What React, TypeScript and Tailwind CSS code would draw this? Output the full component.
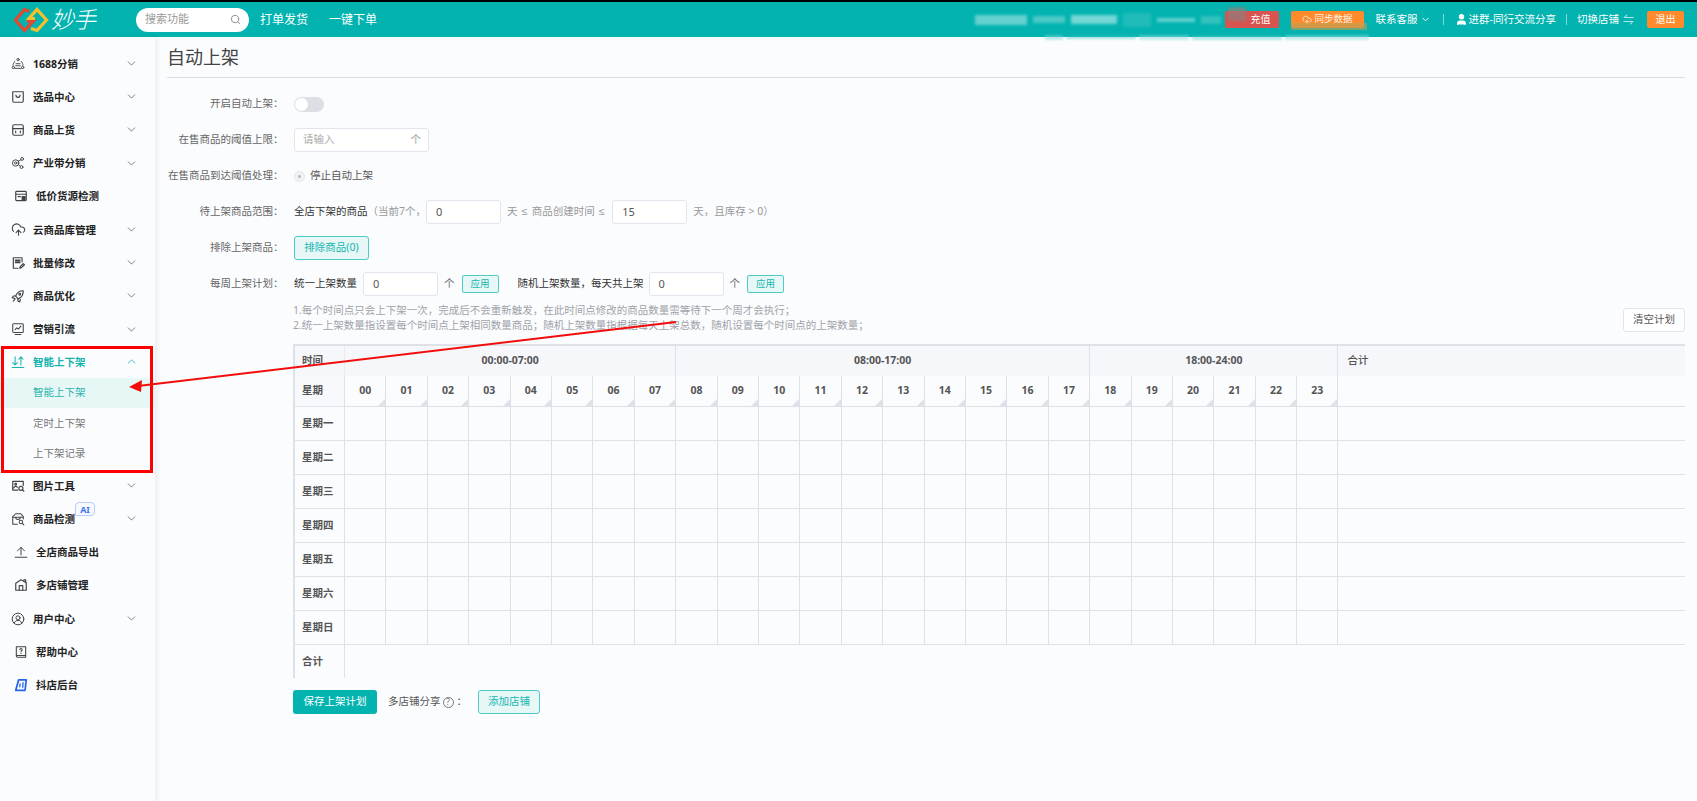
import { ChevronDown, ChevronUp, Search, CloudUpload, User } from "lucide-react"
import type { ReactNode } from "react"

const ic = { width: 14, height: 14, viewBox: "0 0 24 24", fill: "none", stroke: "currentColor", strokeWidth: 1.6, strokeLinecap: "round" as const, strokeLinejoin: "round" as const }

const icons: Record<string, ReactNode> = {
    fenxiao: (
        <svg {...ic}>
            <circle cx="12" cy="4.500" r="2" />
            <circle cx="4" cy="18" r="2" />
            <circle cx="20" cy="18" r="2" />
            <path d="M6.500 7.500c-2 2.500-3 4.500-3 7M17.500 7.500c2 2.500 3 4.500 3 7M6.500 19.500h11M8.500 11.500h7M8 15h8" />
        </svg>
    ),
    xuanpin: (
        <svg {...ic} strokeWidth={2}>
            <path d="M3 3h18v16a2 2 0 0 1-2 2H5a2 2 0 0 1-2-2z" />
            <path d="M8.500 8.500c0 5.500 7 5.500 7 0" />
        </svg>
    ),
    store: (
        <svg {...ic} strokeWidth={2}>
            <rect x="3" y="3" width="18" height="18" rx="2.500" />
            <path d="M3 9.500h18M8 14v2.500M16 14v2.500" />
        </svg>
    ),
    nodes: (
        <svg {...ic}>
            <circle cx="8" cy="12" r="5.500" />
            <circle cx="8" cy="12" r="2" />
            <circle cx="19" cy="5" r="2.500" />
            <circle cx="18" cy="19" r="2.500" />
            <path d="M12.500 9l4.500-2.500M13 15l3 2.500" />
        </svg>
    ),
    wallet: (
        <svg {...ic} strokeWidth={2}>
            <rect x="3" y="4" width="18" height="16" rx="1.500" />
            <path d="M3 9h18M7 13h4" />
            <rect x="14" y="13" width="5" height="5" fill="currentColor" />
        </svg>
    ),
    cloud: <CloudUpload size={15} strokeWidth={1.7} />,
    edit: (
        <svg {...ic} strokeWidth={2}>
            <path d="M19 10V3H4v18h8" />
            <path d="M8 7.500h7M8 11h7" strokeWidth={3} />
            <path d="M15 21l1-3 5-5 2 2-5 5z" />
        </svg>
    ),
    rocket: (
        <svg {...ic} strokeWidth={2}>
            <path d="M21 3c-6 0-11 3-13 9l4 5c6-2 9-7 9-14z" />
            <path d="M8 12H4l-2 3 4 1M12 17v4l3 1 1-4M7 17l-3 4" />
            <circle cx="15" cy="9" r="1.500" />
        </svg>
    ),
    chart: (
        <svg {...ic} strokeWidth={1.800}>
            <rect x="3" y="3" width="18" height="15" rx="1.500" />
            <path d="M7 13l3-3 3 2 4-5M7 21.500h10" />
        </svg>
    ),
    updown: (
        <svg {...ic} strokeWidth={1.800}>
            <path d="M7 3v14M3 13l4 4 4-4M17 17V3M13.500 7L17 3l3.500 4M2 21.500h20" />
        </svg>
    ),
    image: (
        <svg {...ic} strokeWidth={2}>
            <path d="M12 19H3V4h18v7" />
            <circle cx="8" cy="9" r="1.500" />
            <path d="M3 16l5-4 3 2" />
            <circle cx="17" cy="16" r="3.500" />
            <path d="M19.500 18.500L22 21" />
        </svg>
    ),
    boxcheck: (
        <svg {...ic} strokeWidth={1.800}>
            <path d="M11 21H3V8l5-5h9l4 5v4" />
            <path d="M3 9h18M8 9c0 5 8 5 8 0" />
            <circle cx="17" cy="17" r="3" />
            <path d="M19.500 19.500L22 22" />
        </svg>
    ),
    upload: (
        <svg {...ic} strokeWidth={1.700}>
            <path d="M12 17V4M6 10l6-6 6 6M2 21h20" />
        </svg>
    ),
    house: (
        <svg {...ic} strokeWidth={2}>
            <path d="M3 9l9-6 9 5v13H3z" />
            <path d="M9 21v-8h6v8M17 5.500V3h3v5" />
        </svg>
    ),
    user: (
        <svg {...ic} strokeWidth={1.700}>
            <circle cx="12" cy="12" r="10" />
            <circle cx="12" cy="10" r="3.500" />
            <path d="M5.500 19c1-3 3.500-4.500 6.500-4.500s5.500 1.500 6.500 4.500" />
        </svg>
    ),
    help: (
        <svg {...ic} strokeWidth={1.800}>
            <path d="M4 3h16v18H6a2 2 0 0 1-2-2z" />
            <path d="M4 18h16" />
            <path d="M10 8c0-2.500 4-2.500 4 0 0 1.500-2 1.500-2 3.500M12 14v.5" />
        </svg>
    ),
    doudian: (
        <svg {...ic} strokeWidth={3} className="text-[#2563eb]">
            <path d="M8 3h13l-2 18H3z" />
            <path d="M10 15l.5-5M15 16l.5-8" strokeWidth={2.200} />
        </svg>
    ),
}

const before = [
    { label: "1688分销", icon: "fenxiao", arrow: true },
    { label: "选品中心", icon: "xuanpin", arrow: true },
    { label: "商品上货", icon: "store", arrow: true },
    { label: "产业带分销", icon: "nodes", arrow: true },
    { label: "低价货源检测", icon: "wallet" },
    { label: "云商品库管理", icon: "cloud", arrow: true },
    { label: "批量修改", icon: "edit", arrow: true },
    { label: "商品优化", icon: "rocket", arrow: true },
    { label: "营销引流", icon: "chart", arrow: true },
]

const after = [
    { label: "图片工具", icon: "image", arrow: true },
    { label: "商品检测", icon: "boxcheck", arrow: true, ai: true },
    { label: "全店商品导出", icon: "upload" },
    { label: "多店铺管理", icon: "house" },
    { label: "用户中心", icon: "user", arrow: true },
    { label: "帮助中心", icon: "help" },
    { label: "抖店后台", icon: "doudian" },
]

interface MenuItem {
    label: string
    icon: string
    arrow?: boolean
    ai?: boolean
}

function MenuRow({ item }: { item: MenuItem }) {
    return (
        <div className={`relative flex h-[33.2px] items-center ${item.arrow ? "pl-[11px]" : "pl-[14px]"}`}>
            <span className="flex w-[22px] shrink-0 text-[#444]">{icons[item.icon]}</span>
            <span className="text-[10.5px] font-bold leading-4 text-[#222]">{item.label}</span>
            {item.arrow && <ChevronDown size={13} strokeWidth={1.5} className="absolute left-[125px] text-[#666]" />}
            {item.ai && (
                <span className="absolute left-[75px] top-0 flex h-[14px] w-[20px] items-center justify-center rounded-[4px] rounded-bl-none border border-[#b7cdfb] bg-[#f7f9ff] text-[9px] font-bold leading-none text-[#3f76ee]">
                    AI
                </span>
            )}
        </div>
    )
}

function Sidebar() {
    return (
        <aside className="z-10 h-full w-[155px] shrink-0 bg-[#fbfcfe] pt-[10px] shadow-[2px_0_5px_rgba(0,0,0,0.07)]">
            {before.map((item) => (
                <MenuRow key={item.label} item={item} />
            ))}
            <div className="relative flex h-[32px] items-center pl-[11px] text-[#14b5b1]">
                <span className="flex w-[22px] shrink-0">{icons.updown}</span>
                <span className="text-[10.5px] font-bold leading-4">智能上下架</span>
                <ChevronUp size={13} strokeWidth={1.5} className="absolute left-[125px]" />
            </div>
            <div className="flex h-[30.500px] items-center bg-[#e6f7f6] pl-[33px] text-[10.5px] text-[#2ab5b1]">智能上下架</div>
            <div className="flex h-[30.500px] items-center pl-[33px] text-[10.5px] text-[#777]">定时上下架</div>
            <div className="flex h-[30.500px] items-center pl-[33px] text-[10.5px] text-[#777]">上下架记录</div>
            {after.map((item) => (
                <MenuRow key={item.label} item={item} />
            ))}
        </aside>
    )
}

function Logo() {
    return (
        <svg width="36" height="26" viewBox="0 0 36 26" fill="none" strokeWidth="3.200" strokeLinejoin="miter">
            <path d="M16 4.500L11.500 2.500L2.500 13L11.500 23.500L20 14.500L14 14.500" stroke="#e04a35" />
            <path d="M18 21.500L24 23.500L33.500 13L24 2.500L16 11.500L22 11.500" stroke="#f6c02c" />
        </svg>
    )
}

function Header() {
    return (
        <header className="relative flex h-[37px] shrink-0 items-center border-t-2 border-black bg-[#02b3b0] pl-[13px] text-white">
            <Logo />
            <span className="ml-[2px] w-[85px] text-[23px] font-light italic leading-none tracking-[-1px]">妙手</span>
            <div className="flex h-6 w-[113px] items-center justify-between rounded-full bg-white pl-[9px] pr-[8px] text-[11px] text-[#999]">
                搜索功能
                <Search size={11} className="text-[#888]" />
            </div>
            <span className="ml-[11px] text-xs">打单发货</span>
            <span className="ml-[21px] text-xs">一键下单</span>

            <div className="ml-auto flex items-center pr-[13px]">
                <div className="mr-[4px] flex items-center gap-[6px] opacity-60 blur-[1.500px]">
                    <span className="h-[10px] w-[52px] bg-[#a8e6e4]" />
                    <span className="h-[7px] w-[32px] bg-[#7cd9d6]" />
                    <span className="h-[9px] w-[46px] bg-[#c2f0ee]" />
                    <span className="h-[14px] w-[28px] bg-[#36c2bf]" />
                    <span className="h-[4px] w-[38px] bg-[#a8e6e4]" />
                    <span className="h-[8px] w-[20px] bg-[#56cdc9]" />
                </div>
                <span className="relative flex h-[17px] w-[54px] items-center justify-end rounded-[2px] bg-[#d9534f] pr-[8px] text-[10px]">
                    充值
                    <span className="absolute left-[3px] top-[-4px] h-[14px] w-[18px] bg-[#8f7f7d] opacity-70 blur-[1px]" />
                </span>
                <span className="relative ml-[12px] flex h-[17px] w-[73px] items-center justify-center gap-[3px] rounded-[2px] bg-[#ff8b2c] text-[9.5px] text-white/90">
                    <CloudUpload size={10} />
                    同步数据
                    <span className="absolute bottom-[-2px] left-0 h-[7px] w-[76px] bg-[#b9a15a] opacity-60 blur-[0.5px]" />
                </span>
                <span className="ml-[12px] text-[10.5px]">联系客服</span>
                <ChevronDown size={11} className="ml-[2px]" />
                <span className="ml-[12px] h-[11px] w-px bg-white/50" />
                <User size={13} className="ml-[11px]" fill="currentColor" />
                <span className="ml-[1px] text-[10.5px]">进群-同行交流分享</span>
                <span className="ml-[10px] h-[11px] w-px bg-white/50" />
                <span className="ml-[10px] text-[10.5px]">切换店铺</span>
                <span className="ml-[4px] text-[11px] leading-none text-white/80">⇋</span>
                <span className="ml-[13px] flex h-[17px] w-[37px] items-center justify-center rounded-[2px] bg-[#ff8b2c] text-[10px]">退出</span>
            </div>
            <div className="absolute left-[1045px] top-[33px] z-20 flex items-center gap-[3px] opacity-50 blur-[1px]">
                <span className="h-[5px] w-[18px] bg-[#7fd8d5]" />
                <span className="h-[3px] w-[70px] bg-[#4cc9c6]" />
                <span className="h-[5px] w-[50px] bg-[#8fdcda]" />
                <span className="h-[4px] w-[90px] bg-[#6fd3d0]" />
                <span className="h-[5px] w-[84px] bg-[#8fdcda]" />
            </div>
        </header>
    )
}

function Field({ value, className }: { value: string; className: string }) {
    return (
        <span className={`flex h-6 items-center rounded-[3px] border border-[#e2e5eb] bg-white pl-[9px] text-[11px] text-[#555] ${className}`}>
            {value}
        </span>
    )
}

function FormRow({ label, children }: { label: string; children: ReactNode }) {
    return (
        <div className="flex h-6 items-center">
            <span className="w-[116.5px] shrink-0 whitespace-nowrap text-right text-[10.5px] text-[#666]">{label}：</span>
            <div className="ml-[10.5px] flex items-center text-[10.5px] text-[#333]">{children}</div>
        </div>
    )
}

function ApplyButton({ className }: { className: string }) {
    return (
        <span className={`flex h-[18px] w-[37px] items-center justify-center rounded-[2px] border border-[#4ccbc7] bg-[#e6f7f6] text-[9.5px] text-[#14b5b1] ${className}`}>
            应用
        </span>
    )
}

const hours = Array.from({ length: 24 }, (_, i) => String(i).padStart(2, "0"))
const weekdays = ["星期一", "星期二", "星期三", "星期四", "星期五", "星期六", "星期日"]
const line = "border-r border-b border-[#dfe1e8]"

function PlanTable() {
    return (
        <table className="w-[1392px] table-fixed border-separate border-spacing-0 border-t-2 border-l-2 border-[#dfe1e8]">
            <colgroup>
                <col className="w-[50px]" />
                {hours.map((h) => (
                    <col key={h} className="w-[41.400px]" />
                ))}
                <col />
            </colgroup>
            <tbody className="text-[10.5px] font-bold text-[#555]">
                <tr className="h-[30px] bg-[#f6f7fb]">
                    <td className="border-r border-[#e9ebf0] pl-[7px]">时间</td>
                    <td colSpan={8} className="border-r border-[#dfe1e8] text-center">00:00-07:00</td>
                    <td colSpan={10} className="border-r border-[#dfe1e8] text-center">08:00-17:00</td>
                    <td colSpan={6} className="border-r border-[#dfe1e8] text-center">18:00-24:00</td>
                    <td className="pl-[9px] font-medium">合计</td>
                </tr>
                <tr className="h-[31px]">
                    <td className={`${line} bg-[#f8f9fc] pl-[7px]`}>星期</td>
                    {hours.map((h) => (
                        <td key={h} className={`${line} relative text-center`}>
                            {h}
                            <span className="absolute bottom-0 right-0 h-0 w-0 border-b-[7px] border-l-[7px] border-b-[#dfe1e8] border-l-transparent" />
                        </td>
                    ))}
                    <td className="border-b border-[#dfe1e8]" />
                </tr>
                {weekdays.map((d) => (
                    <tr key={d} className="h-[34px]">
                        <td className={`${line} pl-[7px]`}>{d}</td>
                        {hours.map((h) => (
                            <td key={h} className={line} />
                        ))}
                        <td className="border-b border-[#dfe1e8]" />
                    </tr>
                ))}
                <tr className="h-[33px]">
                    <td className="border-r border-[#dfe1e8] pl-[7px]">合计</td>
                    <td colSpan={25} />
                </tr>
            </tbody>
        </table>
    )
}

function Annotation() {
    return (
        <>
            <div className="absolute left-px top-[346px] z-30 h-[127px] w-[152px] border-[3px] border-[#ff0000]" />
            <svg className="absolute left-0 top-0 z-30" width="700" height="400" fill="none">
                <path d="M676 322L138 386" stroke="#f20d0d" strokeWidth="2" />
                <path d="M129 387L142 380L141 392Z" fill="#f20d0d" />
            </svg>
        </>
    )
}

export default function App() {
    return (
        <div className="relative flex h-[801px] w-[1697px] flex-col overflow-hidden bg-[#fbfcfe] font-['Noto_Sans','Noto_Sans_CJK_SC',sans-serif]">
            <Header />
            <div className="flex min-h-0 flex-1">
                <Sidebar />
                <main className="min-w-0 flex-1 pl-[12px] pr-[12px]">
                    <h1 className="h-[41px] border-b border-[#dcdee3] pt-[8px] text-[18px] font-normal leading-6 text-[#444]">自动上架</h1>
                    <div className="mt-[14px] flex flex-col gap-3">
                        <FormRow label="开启自动上架">
                            <span className="flex h-[15px] w-[30px] items-center rounded-full bg-[#dcdfe6] pl-[1px]">
                                <span className="h-[13px] w-[13px] rounded-full bg-white" />
                            </span>
                        </FormRow>
                        <FormRow label="在售商品的阈值上限">
                            <span className="flex h-6 w-[135px] items-center justify-between rounded-[3px] border border-[#e2e5eb] bg-white pl-[8px] pr-[7px] text-[10.5px] text-[#aaa]">
                                请输入
                                <span className="text-[#999]">个</span>
                            </span>
                        </FormRow>
                        <FormRow label="在售商品到达阈值处理">
                            <span className="flex h-[11px] w-[11px] items-center justify-center rounded-full border border-[#e2e5eb] bg-[#f2f3f7]">
                                <span className="h-[3px] w-[3px] rounded-full bg-[#b5b8c0]" />
                            </span>
                            <span className="ml-[5px] text-[#555]">停止自动上架</span>
                        </FormRow>
                        <FormRow label="待上架商品范围">
                            全店下架的商品
                            <span className="text-[#999]">（当前7个，</span>
                            <Field value="0" className="w-[75px]" />
                            <span className="ml-[6px] text-[#999]">
                                天 <span className="px-[1.5px] font-['Liberation_Sans']">≤</span> 商品创建时间 <span className="px-[1.5px] font-['Liberation_Sans']">≤</span>
                            </span>
                            <Field value="15" className="ml-[6px] w-[75px]" />
                            <span className="ml-[6px] text-[#999]">天，且库存 &gt; 0）</span>
                        </FormRow>
                        <FormRow label="排除上架商品">
                            <span className="flex h-6 w-[75px] items-center justify-center rounded-[3px] border border-[#4ccbc7] bg-[#e6f7f6] text-[#14b5b1]">
                                排除商品(0)
                            </span>
                        </FormRow>
                        <FormRow label="每周上架计划">
                            统一上架数量
                            <Field value="0" className="ml-[6px] w-[75px]" />
                            <span className="ml-[6px] text-[#666]">个</span>
                            <ApplyButton className="ml-[7px]" />
                            <span className="ml-[19px]">随机上架数量，每天共上架</span>
                            <Field value="0" className="ml-[5px] w-[75px]" />
                            <span className="ml-[6px] text-[#666]">个</span>
                            <ApplyButton className="ml-[7px]" />
                        </FormRow>
                    </div>
                    <div className="ml-[126px] mt-[7px] flex h-[41px] items-start justify-between">
                        <div className="text-[10.5px] leading-[15px] text-[#a0a3a9]">
                            <p>1.每个时间点只会上下架一次，完成后不会重新触发，在此时间点修改的商品数量需等待下一个周才会执行；</p>
                            <p>2.统一上架数量指设置每个时间点上架相同数量商品；随机上架数量指根据每天上架总数，随机设置每个时间点的上架数量；</p>
                        </div>
                        <span className="mt-[5px] flex h-6 w-[62px] items-center justify-center rounded-[3px] border border-[#e2e5eb] bg-white text-[10.5px] text-[#555]">
                            清空计划
                        </span>
                    </div>
                    <div className="ml-[126px]">
                        <PlanTable />
                        <div className="mt-[12px] flex h-6 items-center text-[10.5px] text-[#555]">
                            <span className="flex h-6 w-[84px] items-center justify-center rounded-[3px] bg-[#02b3b0] text-white">保存上架计划</span>
                            <span className="ml-[11px]">多店铺分享</span>
                            <span className="ml-[2px] flex h-[11px] w-[11px] items-center justify-center rounded-full border border-[#777] text-[8px] leading-none text-[#777]">?</span>
                            <span className="ml-[3px]">：</span>
                            <span className="ml-[11px] flex h-6 w-[62px] items-center justify-center rounded-[3px] border border-[#4ccbc7] bg-[#e6f7f6] text-[#14b5b1]">添加店铺</span>
                        </div>
                    </div>
                </main>
            </div>
            <Annotation />
        </div>
    )
}
